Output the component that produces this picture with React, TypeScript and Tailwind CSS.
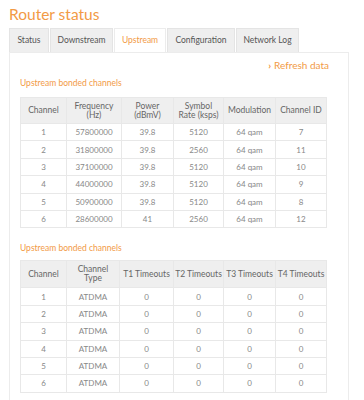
import React from 'react';

const tabs = ['Status', 'Downstream', 'Upstream', 'Configuration', 'Network Log'];
const tabWidths = ['w-[40px]', 'w-[63px]', 'w-[52px]', 'w-[68px]', 'w-[63px]'];

const bonded = [
  ['1', '57800000', '39.8', '5120', '64 qam', '7'],
  ['2', '31800000', '39.8', '2560', '64 qam', '11'],
  ['3', '37100000', '39.8', '5120', '64 qam', '10'],
  ['4', '44000000', '39.8', '5120', '64 qam', '9'],
  ['5', '50900000', '39.8', '5120', '64 qam', '8'],
  ['6', '28600000', '41', '2560', '64 qam', '12'],
];

const timeouts = [1, 2, 3, 4, 5, 6].map(n => [String(n), 'ATDMA', '0', '0', '0', '0']);

const colW = ['w-[46px]', 'w-[55px]', 'w-[52px]', 'w-[50px]', 'w-[52px]', 'w-[51px]'];
const colW2 = ['w-[46px]', 'w-[53px]', 'w-[54px]', 'w-[50px]', 'w-[52px]', 'w-[51px]'];

const Table: React.FC<{ head: string[][]; rows: string[][]; widths: string[]; headH: string; rowH: string }> = ({ head, rows, widths, headH, rowH }) => (
  <table className="w-[306px] table-fixed border-collapse text-center">
    <thead>
      <tr className={`${headH} bg-[#efefef]`}>
        {head.map((h, i) => (
          <th key={i} className={`${widths[i]} border border-[#e8e8e8] font-normal text-[8.5px] leading-[9px] text-[#666]`}>
            {h.map((line, j) => (
              <div key={j}>{line}</div>
            ))}
          </th>
        ))}
      </tr>
    </thead>
    <tbody>
      {rows.map((r, i) => (
        <tr key={i} className={rowH}>
          {r.map((c, j) => (
            <td key={j} className="border border-[#e8e8e8] p-0 text-[8px] text-[#888]">
              {c}
            </td>
          ))}
        </tr>
      ))}
    </tbody>
  </table>
);

export default function App() {
  return (
    <div className="w-[364px] h-[400px] overflow-hidden bg-white px-[9px] font-['Lato',sans-serif]">
      <h1 className="pt-[4px] h-[28px] text-[15.5px] leading-[20px] text-[#f29a45]">Router status</h1>

      <div className="flex h-[24px] gap-[1px]">
        {tabs.map((t, i) => (
          <div
            key={t}
            className={`${tabWidths[i]} flex items-center justify-center text-[8.5px] ${
              t === 'Upstream'
                ? 'bg-white text-[#f29a45] border-t border-x border-[#ececec]'
                : 'bg-[#efefef] text-[#555] border-t border-x border-[#e4e4e4]'
            }`}
          >
            {t}
          </div>
        ))}
      </div>

      <div className="w-[340px] h-[360px] border border-[#ececec] pl-[10px]">
        <div className="flex h-[18px] items-end justify-end pr-[19px] text-[#f29a45] text-[10px] leading-[12px]">
          <span className="mr-[3px] font-bold">›</span>
          <span>Refresh data</span>
        </div>

        <div className="h-[17px] flex items-end text-[8.5px] leading-[10px] text-[#f29a45]">Upstream bonded channels</div>
        <div className="h-[9px]" />
        <Table
          head={[['Channel'], ['Frequency', '(Hz)'], ['Power', '(dBmV)'], ['Symbol', 'Rate (ksps)'], ['Modulation'], ['Channel ID']]}
          rows={bonded}
          widths={colW}
          headH="h-[26px]"
          rowH="h-[17.4px]"
        />

        <div className="h-[25px] flex items-end text-[8.5px] leading-[10px] text-[#f29a45]">Upstream bonded channels</div>
        <div className="h-[7px]" />
        <Table
          head={[['Channel'], ['Channel', 'Type'], ['T1 Timeouts'], ['T2 Timeouts'], ['T3 Timeouts'], ['T4 Timeouts']]}
          rows={timeouts}
          widths={colW2}
          headH="h-[27px]"
          rowH="h-[17.4px]"
        />
      </div>
    </div>
  );
}
